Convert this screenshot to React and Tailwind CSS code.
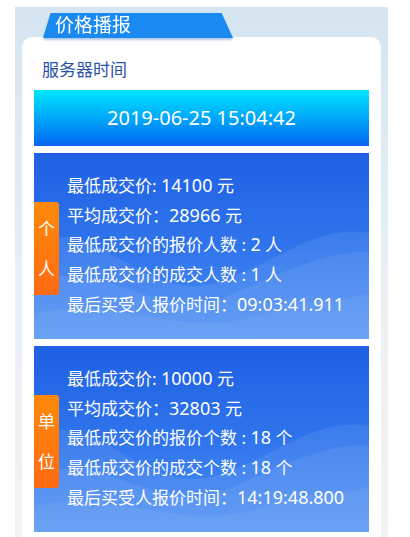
import React from "react";

const cards = [
  {
    tag: ["个", "人"],
    lines: [
      ["最低成交价: ", "14100", " 元"],
      ["平均成交价：", "28966", " 元"],
      ["最低成交价的报价人数 : ", "2", " 人"],
      ["最低成交价的成交人数 : ", "1", " 人"],
      ["最后买受人报价时间：", "09:03:41.911", ""],
    ],
  },
  {
    tag: ["单", "位"],
    lines: [
      ["最低成交价: ", "10000", " 元"],
      ["平均成交价：", "32803", " 元"],
      ["最低成交价的报价个数 : ", "18", " 个"],
      ["最低成交价的成交个数 : ", "18", " 个"],
      ["最后买受人报价时间：", "14:19:48.800", ""],
    ],
  },
];

const Waves = () => (
  <svg className="absolute inset-0 w-full h-full" viewBox="0 0 334 186" preserveAspectRatio="none">
    <path d="M0 90 C60 60 110 150 180 130 C240 112 280 70 334 80 L334 186 L0 186 Z" fill="#ffffff" fillOpacity="0.08" />
    <path d="M0 130 C70 100 120 175 200 140 C250 118 300 95 334 100 L334 186 L0 186 Z" fill="#ffffff" fillOpacity="0.07" />
    <path d="M0 160 C80 140 150 190 230 160 C280 142 310 150 334 140 L334 186 L0 186 Z" fill="#ffffff" fillOpacity="0.05" />
  </svg>
);

const InfoCard = ({ tag, lines }) => (
  <div className="relative h-[186px] overflow-hidden bg-gradient-to-b from-[#1f60e4] via-[#2f74ec] to-[#4a8ef4]">
    <Waves />
    <div className="relative flex h-full">
      <div className="self-center mt-[5px] w-[25px] h-[93px] rounded-r-[3px] bg-gradient-to-b from-[#ff8a0a] to-[#ff6a12] flex flex-col items-center justify-center gap-[17px] text-white text-[17px] leading-[23px]">
        <span>{tag[0]}</span>
        <span>{tag[1]}</span>
      </div>
      <div className="pl-[8px] pt-[18px] text-white text-[17px] leading-[29.7px]">
        {lines.map(([label, value, unit], i) => (
          <div key={i}>
            {label}
            <span className="text-[18px]">{value}</span>
            {unit}
          </div>
        ))}
      </div>
    </div>
  </div>
);

const App = () => {
  return (
    <div
      className="w-[410px] h-[537px] overflow-hidden bg-white"
      style={{ fontFamily: '"Noto Sans", "Noto Sans CJK SC", sans-serif' }}
    >
      <div className="ml-[15px] mt-[7px] w-[373px] h-[530px] bg-gradient-to-b from-[#d5e5f1] via-[#e9eff4] to-[#f2f3f5] px-[7px] pt-[6px]">
        <div className="relative z-10 ml-[21px] w-[190px] h-[25px] drop-shadow-[0_2px_1px_rgba(20,90,180,0.35)]">
          <div className="absolute inset-0 bg-[#1a8af0] [clip-path:polygon(4%_0,94%_0,100%_100%,0_100%)]" />
          <div className="relative pl-[12px] text-white text-[19px] leading-[25px]">价格播报</div>
        </div>
        <div className="-mt-[1px] bg-white rounded-t-[10px] px-[12px] pt-[20px] pb-[8px]">
          <div className="text-[17px] leading-[26px] text-[#2a52a8] pl-[8px]">服务器时间</div>
          <div className="mt-[7px] h-[56px] bg-gradient-to-b from-[#05e6fd] to-[#1163f0] flex items-center justify-center text-white text-[20px]">
            2019-06-25 15:04:42
          </div>
          <div className="mt-[7px] flex flex-col gap-[7px]">
            {cards.map((c, i) => (
              <InfoCard key={i} tag={c.tag} lines={c.lines} />
            ))}
          </div>
        </div>
      </div>
    </div>
  );
};

export default App;
